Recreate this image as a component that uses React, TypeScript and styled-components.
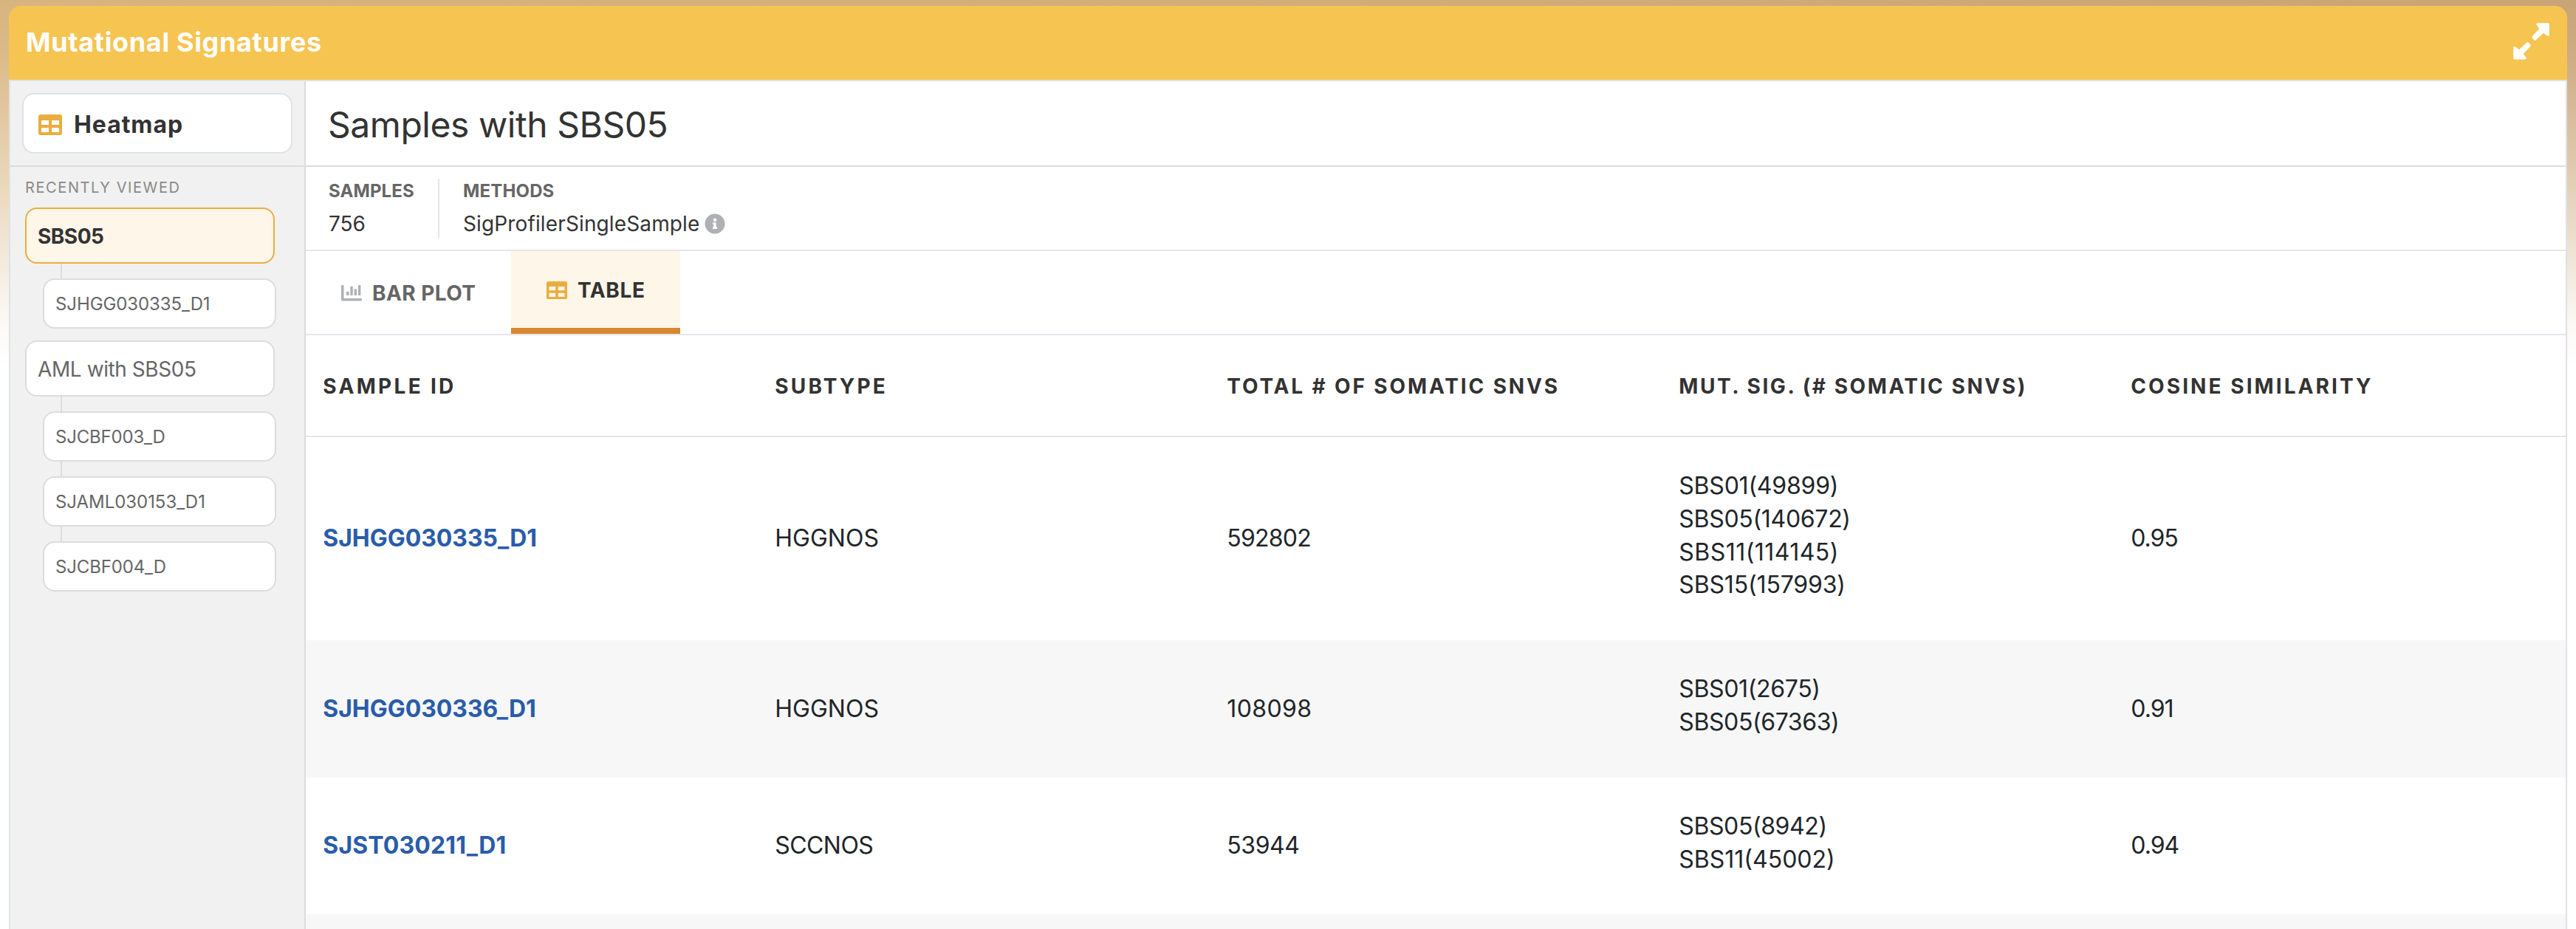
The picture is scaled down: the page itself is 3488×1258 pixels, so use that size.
import React from "react";
import styled, { createGlobalStyle, css } from "styled-components";
import { FaInfoCircle } from "react-icons/fa";

const GlobalStyle = createGlobalStyle`
  *, *::before, *::after { box-sizing: border-box; }
  body {
    margin: 0;
    background: #fff;
    font-family: Inter, "Liberation Sans", sans-serif;
    color: #333;
    overflow: hidden;
  }
`;

const Page = styled.div`
  height: 1258px;
  padding: 8px 12px 0;
  overflow: hidden;
  background:
    linear-gradient(180deg, rgba(255, 255, 255, 0) 0, rgba(255, 255, 255, 0.1) 80px, rgba(255, 255, 255, 0.45) 240px, rgba(255, 255, 255, 0.93) 440px, #fff 495px),
    linear-gradient(90deg, #d7b47f 0%, #d2ad7a 50%, #c8a477 100%);
`;

const Panel = styled.section`
  height: 1250px;
  display: flex;
  flex-direction: column;
`;

const PanelHeader = styled.header`
  flex: 0 0 100px;
  display: flex;
  align-items: center;
  justify-content: space-between;
  padding: 0 24px 0 23px;
  border-radius: 16px 16px 0 0;
  background: #f6c451;
  color: #fff;
`;

const Spaced = styled.span<{ $ls?: number }>`
  letter-spacing: ${(p) => p.$ls ?? 0}px;
  white-space: nowrap;
`;

const PanelTitle = styled(Spaced).attrs({ as: "h1" })`
  margin: 0;
  padding-bottom: 3px;
  font-size: 36px;
  font-weight: 700;
`;

const ExpandButton = styled.button`
  display: flex;
  padding: 0;
  margin: -4px 0 0;
  border: 0;
  background: none;
  color: #fff;
`;

const Body = styled.div`
  flex: 1;
  min-height: 0;
  display: flex;
  border: 2px solid #dee2e6;
  border-bottom: 0;
  background: #fff;
`;

const Sidebar = styled.aside`
  flex: 0 0 400px;
  border-right: 2px solid #dcdcdc;
  background: #f1f1f1;
`;

const SidebarTop = styled.div`
  height: 116px;
  padding: 16px;
  border-bottom: 2px solid #dcdcdc;
`;

const HeatmapButton = styled.button`
  width: 366px;
  height: 82px;
  display: flex;
  align-items: center;
  gap: 16px;
  padding: 3px 20px 0;
  border: 2px solid #dee2e6;
  border-radius: 16px;
  background: #fff;
  color: #333;
  font: 700 32px Inter, "Liberation Sans", sans-serif;
`;

const SectionLabel = styled(Spaced)`
  display: block;
  padding: 14px 0 0 20px;
  line-height: 28px;
  font-size: 20px;
  color: #888;
`;

const Groups = styled.div`
  display: flex;
  flex-direction: column;
  gap: 16px;
  padding: 13px 0 0 20px;
`;

const itemBox = css`
  display: flex;
  align-items: center;
  border: 2px solid #dcdcdc;
  border-radius: 16px;
  background: #fff;
  color: #666;
`;

const GroupItem = styled.div<{ $active?: boolean }>`
  ${itemBox}
  width: 338px;
  height: 76px;
  padding: 2px 15px 0;
  font-size: 28px;
  ${(p) =>
    p.$active &&
    css`
      border-color: #eaad3f;
      background: #fef6e8;
      color: #333;
      font-weight: 700;
    `}
`;

const ChildItem = styled.div`
  ${itemBox}
  width: 316px;
  height: 68px;
  margin-left: 24px;
  padding: 1px 15px 0;
  font-size: 24px;
`;

const Connector = styled.div`
  width: 2px;
  height: 20px;
  margin-left: 48px;
  background: #dcdcdc;
`;

const Main = styled.main`
  flex: 1;
  min-width: 0;
`;

const TitleBar = styled.div`
  height: 116px;
  display: flex;
  align-items: center;
  padding: 3px 30px 0;
  border-bottom: 2px solid #dcdcdc;
`;

const Title = styled(Spaced).attrs({ as: "h2" })`
  margin: 0;
  font-size: 48px;
  font-weight: 400;
`;

const Stats = styled.div`
  height: 114px;
  display: flex;
  padding: 16px 31px;
  border-bottom: 2px solid #e5e5ea;
`;

const Stat = styled.div<{ $divided?: boolean }>`
  height: 80px;
  ${(p) => p.$divided && "width: 150px; border-right: 2px solid #e5e5ea; margin-right: 32px;"}
`;

const StatLabel = styled.div`
  line-height: 33px;
  font-size: 24px;
  font-weight: 700;
  color: #666;
`;

const StatValue = styled.div`
  display: flex;
  align-items: center;
  gap: 7px;
  margin-top: 8px;
  line-height: 40px;
  font-size: 28px;

  svg { color: #adb1b5; }
`;

const Tabs = styled.nav`
  height: 114px;
  display: flex;
  border-bottom: 2px solid #e5e5ea;
`;

const Tab = styled.button<{ $active?: boolean; $width: number }>`
  width: ${(p) => p.$width}px;
  height: 112px;
  display: flex;
  align-items: center;
  gap: 14px;
  padding: 2px 0 0 48px;
  border: 0;
  border-bottom: ${(p) => (p.$active ? "8px solid #d6892e" : "0")};
  background: ${(p) => (p.$active ? "#fef6e8" : "transparent")};
  color: ${(p) => (p.$active ? "#333" : "#666")};
  font: 700 28px Inter, "Liberation Sans", sans-serif;
`;

const rowGrid = css`
  display: grid;
  grid-template-columns: repeat(5, 612px);
  align-items: center;
`;

const HeadRow = styled.div`
  ${rowGrid}
  height: 138px;
  padding-top: 2px;
  border-bottom: 2px solid #e5e5ea;
  font-size: 28px;
  font-weight: 700;
`;

const Row = styled.div`
  ${rowGrid}
  min-height: 185.6px;
  background: #fff;
  font-size: 32px;
  line-height: 44.8px;
  color: #212529;

  &:nth-child(even) { background: #f7f7f7; }
`;

const Cell = styled.div`
  padding-left: 23.3px;
`;

const SampleLink = styled(Spaced)`
  color: #2a5caa;
  font-weight: 700;
`;

const SignatureList = styled.div`
  padding: 44px 0 52px 23.3px;
`;

const Signature = styled(Spaced)`
  display: block;
`;

function TableIcon({ width }: { width: number }) {
  return (
    <svg width={width} height={(width * 28) / 32} viewBox="0 0 32 28" fill="#eaad3f">
      <path
        fillRule="evenodd"
        d="M3 0h26a3 3 0 0 1 3 3v22a3 3 0 0 1-3 3H3a3 3 0 0 1-3-3V3a3 3 0 0 1 3-3zM4 8v6h10V8zM18 8v6h10V8zM4 18v6h10v-6zM18 18v6h10v-6z"
      />
    </svg>
  );
}

function ChartIcon() {
  return (
    <svg width="28" height="22" viewBox="0 0 28 22" fill="#aeb1b4">
      <path d="M.9 0h1.700a.9.9 0 0 1 .9.9V18h23.600a.9.9 0 0 1 .9.9v1.700a.9.9 0 0 1-.9.9H1.800A1.800 1.800 0 0 1 0 19.700V.9A.9.9 0 0 1 .9 0z" />
      <rect x="7" y="8.700" width="3.500" height="5.400" rx=".8" />
      <rect x="12.300" y="1.700" width="3.500" height="12.400" rx=".8" />
      <rect x="17.600" y="5.300" width="3.500" height="8.800" rx=".8" />
      <rect x="22.900" y="0" width="3.500" height="14.100" rx=".8" />
    </svg>
  );
}

function ExpandIcon() {
  const arrow = "M32.800 1.800H47.200V16.200L41 11.600L29.500 22.100L26.800 19.400L37.400 8z";
  return (
    <svg width="49" height="50" viewBox="0 0 49 50" fill="currentColor" stroke="currentColor" strokeWidth="3.200" strokeLinejoin="round">
      <path d={arrow} />
      <path d={arrow} transform="rotate(180 24.500 24.900)" />
    </svg>
  );
}

type Label = { text: string; ls: number };

const groups: { label: Label; active?: boolean; children: Label[] }[] = [
  { label: { text: "SBS05", ls: -0.5 }, active: true, children: [{ text: "SJHGG030335_D1", ls: -0.1 }] },
  {
    label: { text: "AML with SBS05", ls: -0.42 },
    children: [
      { text: "SJCBF003_D", ls: -0.2 },
      { text: "SJAML030153_D1", ls: -0.05 },
      { text: "SJCBF004_D", ls: -0.15 },
    ],
  },
];

const columns: Label[] = [
  { text: "SAMPLE ID", ls: 3.3 },
  { text: "SUBTYPE", ls: 3.2 },
  { text: "TOTAL # OF SOMATIC SNVS", ls: 2.87 },
  { text: "MUT. SIG. (# SOMATIC SNVS)", ls: 2.56 },
  { text: "COSINE SIMILARITY", ls: 3.07 },
];

const rows: { id: Label; subtype: Label; total: Label; signatures: Label[]; cosine: Label }[] = [
  {
    id: { text: "SJHGG030335_D1", ls: -0.05 },
    subtype: { text: "HGGNOS", ls: 0 },
    total: { text: "592802", ls: -0.76 },
    signatures: [
      { text: "SBS01(49899)", ls: -0.22 },
      { text: "SBS05(140672)", ls: -0.3 },
      { text: "SBS11(114145)", ls: 0.46 },
      { text: "SBS15(157993)", ls: -0.15 },
    ],
    cosine: { text: "0.95", ls: -1.07 },
  },
  {
    id: { text: "SJHGG030336_D1", ls: -0.05 },
    subtype: { text: "HGGNOS", ls: 0 },
    total: { text: "108098", ls: 0.39 },
    signatures: [
      { text: "SBS01(2675)", ls: -0.35 },
      { text: "SBS05(67363)", ls: -0.4 },
    ],
    cosine: { text: "0.91", ls: -1 },
  },
  {
    id: { text: "SJST030211_D1", ls: 0.15 },
    subtype: { text: "SCCNOS", ls: -0.57 },
    total: { text: "53944", ls: -0.43 },
    signatures: [
      { text: "SBS05(8942)", ls: -0.4 },
      { text: "SBS11(45002)", ls: 0 },
    ],
    cosine: { text: "0.94", ls: -1 },
  },
];

const RowGroup = styled.div``;

export default function App() {
  return (
    <>
      <GlobalStyle />
      <Page>
        <Panel>
          <PanelHeader>
            <PanelTitle $ls={0.65}>Mutational Signatures</PanelTitle>
            <ExpandButton aria-label="Expand">
              <ExpandIcon />
            </ExpandButton>
          </PanelHeader>
          <Body>
            <Sidebar>
              <SidebarTop>
                <HeatmapButton>
                  <TableIcon width={32} />
                  <Spaced $ls={0.94}>Heatmap</Spaced>
                </HeatmapButton>
              </SidebarTop>
              <SectionLabel $ls={1.59}>RECENTLY VIEWED</SectionLabel>
              <Groups>
                {groups.map((group) => (
                  <div key={group.label.text}>
                    <GroupItem $active={group.active}>
                      <Spaced $ls={group.label.ls}>{group.label.text}</Spaced>
                    </GroupItem>
                    {group.children.map((child) => (
                      <React.Fragment key={child.text}>
                        <Connector />
                        <ChildItem>
                          <Spaced $ls={child.ls}>{child.text}</Spaced>
                        </ChildItem>
                      </React.Fragment>
                    ))}
                  </div>
                ))}
              </Groups>
            </Sidebar>
            <Main>
              <TitleBar>
                <Title $ls={-0.46}>Samples with SBS05</Title>
              </TitleBar>
              <Stats>
                <Stat $divided>
                  <StatLabel>
                    <Spaced $ls={0.11}>SAMPLES</Spaced>
                  </StatLabel>
                  <StatValue>756</StatValue>
                </Stat>
                <Stat>
                  <StatLabel>
                    <Spaced $ls={0.15}>METHODS</Spaced>
                  </StatLabel>
                  <StatValue>
                    <Spaced $ls={0.13}>SigProfilerSingleSample</Spaced>
                    <FaInfoCircle size={28} />
                  </StatValue>
                </Stat>
              </Stats>
              <Tabs>
                <Tab $width={278}>
                  <ChartIcon />
                  <Spaced $ls={0.42}>BAR PLOT</Spaced>
                </Tab>
                <Tab $width={229} $active>
                  <TableIcon width={28} />
                  <Spaced $ls={0.63}>TABLE</Spaced>
                </Tab>
              </Tabs>
              <HeadRow>
                {columns.map((column) => (
                  <Cell key={column.text}>
                    <Spaced $ls={column.ls}>{column.text}</Spaced>
                  </Cell>
                ))}
              </HeadRow>
              <RowGroup>
                {rows.map((row) => (
                  <Row key={row.id.text}>
                    <Cell>
                      <SampleLink $ls={row.id.ls}>{row.id.text}</SampleLink>
                    </Cell>
                    <Cell>
                      <Spaced $ls={row.subtype.ls}>{row.subtype.text}</Spaced>
                    </Cell>
                    <Cell>
                      <Spaced $ls={row.total.ls}>{row.total.text}</Spaced>
                    </Cell>
                    <SignatureList>
                      {row.signatures.map((signature) => (
                        <Signature key={signature.text} $ls={signature.ls}>
                          {signature.text}
                        </Signature>
                      ))}
                    </SignatureList>
                    <Cell>
                      <Spaced $ls={row.cosine.ls}>{row.cosine.text}</Spaced>
                    </Cell>
                  </Row>
                ))}
                <Row />
              </RowGroup>
            </Main>
          </Body>
        </Panel>
      </Page>
    </>
  );
}
